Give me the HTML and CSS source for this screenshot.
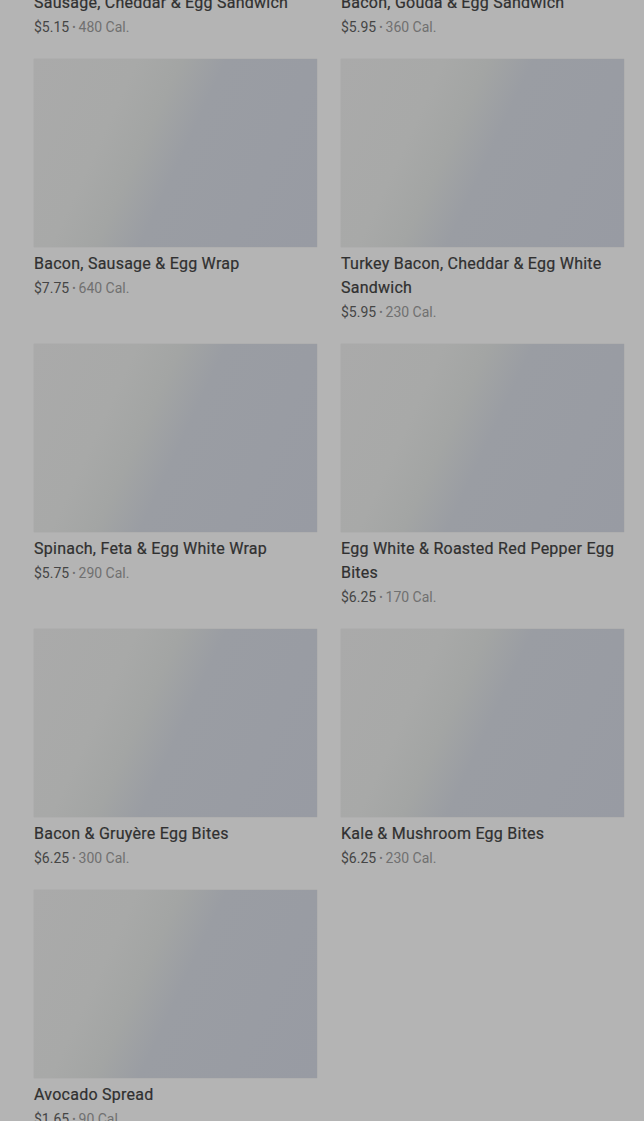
FILE: index.html
```html
<!DOCTYPE html>
<html lang="en">
<head>
<meta charset="utf-8">
<title>Menu</title>
<link rel="stylesheet" href="styles.css">
</head>
<body>
<main class="page">
  <ul class="grid">
    <li class="card"><div class="thumb"></div><h3 class="name">Sausage, Cheddar &amp; Egg Sandwich</h3><p class="meta"><span class="price">$5.15</span><span class="dot">•</span><span class="cal">480 Cal.</span></p></li>
    <li class="card"><div class="thumb"></div><h3 class="name">Bacon, Gouda &amp; Egg Sandwich</h3><p class="meta"><span class="price">$5.95</span><span class="dot">•</span><span class="cal">360 Cal.</span></p></li>
    <li class="card"><div class="thumb"></div><h3 class="name">Bacon, Sausage &amp; Egg Wrap</h3><p class="meta"><span class="price">$7.75</span><span class="dot">•</span><span class="cal">640 Cal.</span></p></li>
    <li class="card"><div class="thumb"></div><h3 class="name">Turkey Bacon, Cheddar &amp; Egg White Sandwich</h3><p class="meta"><span class="price">$5.95</span><span class="dot">•</span><span class="cal">230 Cal.</span></p></li>
    <li class="card"><div class="thumb"></div><h3 class="name">Spinach, Feta &amp; Egg White Wrap</h3><p class="meta"><span class="price">$5.75</span><span class="dot">•</span><span class="cal">290 Cal.</span></p></li>
    <li class="card"><div class="thumb"></div><h3 class="name">Egg White &amp; Roasted Red Pepper Egg Bites</h3><p class="meta"><span class="price">$6.25</span><span class="dot">•</span><span class="cal">170 Cal.</span></p></li>
    <li class="card"><div class="thumb"></div><h3 class="name">Bacon &amp; Gruyère Egg Bites</h3><p class="meta"><span class="price">$6.25</span><span class="dot">•</span><span class="cal">300 Cal.</span></p></li>
    <li class="card"><div class="thumb"></div><h3 class="name">Kale &amp; Mushroom Egg Bites</h3><p class="meta"><span class="price">$6.25</span><span class="dot">•</span><span class="cal">230 Cal.</span></p></li>
    <li class="card"><div class="thumb"></div><h3 class="name">Avocado Spread</h3><p class="meta"><span class="price">$1.65</span><span class="dot">•</span><span class="cal">90 Cal.</span></p></li>
  </ul>
</main>
</body>
</html>
```

FILE: styles.css
```css
html, body {
  margin: 0;
  padding: 0;
  background: #b4b4b4;
  height: 1121px;
  overflow: hidden;
}
body {
  font-family: Roboto, "Liberation Sans", sans-serif;
  color: #333333;
}
.page {
  padding: 0 20px 0 34px;
  margin-top: -202px;
}
.grid {
  list-style: none;
  margin: 0;
  padding: 0;
  display: grid;
  grid-template-columns: 283px 283px;
  column-gap: 24px;
  row-gap: 20px;
  align-items: start;
}
.card {
  display: flex;
  flex-direction: column;
}
.thumb {
  height: 188px;
  background: linear-gradient(115deg, #aaaaaa 0%, #a8a9a8 28%, #a3a5a4 40%, #9a9da3 52%, #989ba3 100%);
  box-shadow: 0 0 1px rgba(0,0,0,0.15);
  margin-bottom: 5px;
}
.name {
  margin: 0;
  font-size: 16px;
  font-weight: 400;
  line-height: 24px;
  color: #303030;
  letter-spacing: 0.25px;
  -webkit-text-stroke: 0.2px #303030;
}
.meta {
  margin: 0;
  font-size: 14px;
  line-height: 24px;
  height: 24px;
  color: #707070;
}
.price {
  color: #454545;
}
.dot {
  display: inline-block;
  margin: 0 3px;
  font-size: 10px;
  line-height: 0;
  vertical-align: 1px;
}
```
